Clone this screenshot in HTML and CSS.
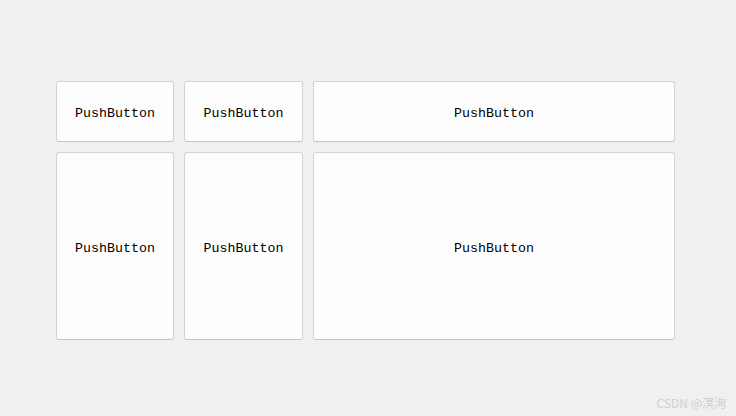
FILE: index.html
```html
<!DOCTYPE html>
<html>
<head>
<meta charset="utf-8">
<link rel="stylesheet" href="styles.css">
</head>
<body>
<div class="stage">
  <div class="grid">
    <button class="btn">PushButton</button>
    <button class="btn">PushButton</button>
    <button class="btn">PushButton</button>
    <button class="btn">PushButton</button>
    <button class="btn">PushButton</button>
    <button class="btn">PushButton</button>
  </div>
</div>
<div class="mark">CSDN @溟洵</div>
</body>
</html>
```
FILE: styles.css
```css
html, body {
  margin: 0;
  padding: 0;
  background: #f0f0f0;
  width: 736px;
  height: 416px;
  overflow: hidden;
}
.stage {
  padding: 81px 0 0 56px;
}
.grid {
  display: grid;
  grid-template-columns: 118px 119px 362px;
  grid-template-rows: 61px 188px;
  gap: 10px;
}
.btn {
  margin: 0;
  padding: 4px 0 0;
  background: #fdfdfd;
  border: 1px solid #d3d3d3;
  border-bottom-color: #c4c4c4;
  border-radius: 3px;
  font-family: "Liberation Mono", "DejaVu Sans Mono", monospace;
  font-size: 13.3px;
  font-weight: normal;
  color: #000;
  text-align: center;
}
.mark {
  position: absolute;
  right: 10px;
  bottom: 5px;
  font-family: "Noto Sans CJK SC", "Liberation Sans", sans-serif;
  font-size: 12px;
  color: #cfcfcf;
}
```
